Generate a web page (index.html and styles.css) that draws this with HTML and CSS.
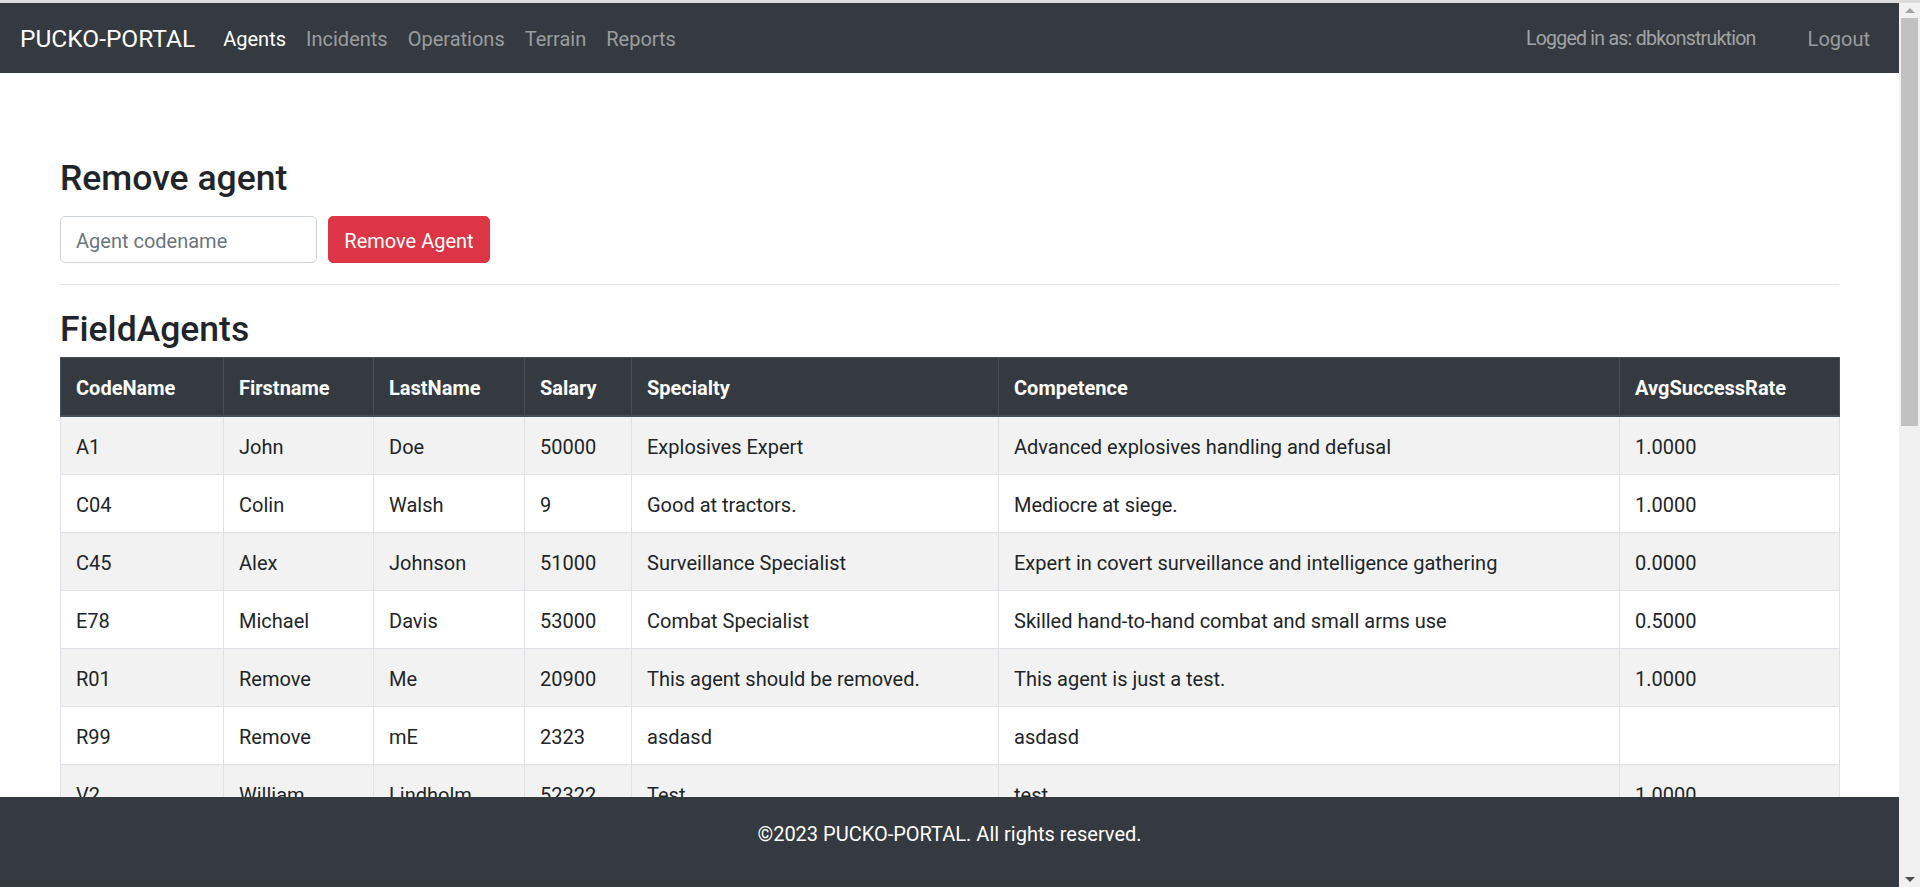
FILE: index.html
```html
<!DOCTYPE html>
<html lang="en">
<head>
<meta charset="utf-8">
<title>PUCKO-PORTAL - Agents</title>
<link rel="stylesheet" href="styles.css">
</head>
<body>
<div class="top-strip"></div>
<div class="window">
  <div class="viewport">
    <nav class="navbar">
      <a class="brand" href="#">PUCKO-PORTAL</a>
      <ul class="nav-list">
        <li><a class="nav-link active" href="#">Agents</a></li>
        <li><a class="nav-link" href="#">Incidents</a></li>
        <li><a class="nav-link" href="#">Operations</a></li>
        <li><a class="nav-link" href="#">Terrain</a></li>
        <li><a class="nav-link" href="#">Reports</a></li>
      </ul>
      <div class="nav-right">
        <span class="nav-text">Logged in as: dbkonstruktion</span>
        <a class="nav-link" href="#">Logout</a>
      </div>
    </nav>

    <main class="content">
      <h3 class="heading">Remove agent</h3>
      <form class="remove-form">
        <input class="form-control" type="text" placeholder="Agent codename">
        <button class="btn-danger" type="button">Remove Agent</button>
      </form>
      <hr class="divider">
      <h3 class="heading heading-table">FieldAgents</h3>
      <table class="agents">
        <colgroup>
          <col class="c-code"><col class="c-first"><col class="c-last"><col class="c-salary"><col class="c-spec"><col class="c-comp"><col class="c-rate">
        </colgroup>
        <thead>
          <tr><th>CodeName</th><th>Firstname</th><th>LastName</th><th>Salary</th><th>Specialty</th><th>Competence</th><th>AvgSuccessRate</th></tr>
        </thead>
        <tbody>
          <tr><td>A1</td><td>John</td><td>Doe</td><td>50000</td><td>Explosives Expert</td><td>Advanced explosives handling and defusal</td><td>1.0000</td></tr>
          <tr><td>C04</td><td>Colin</td><td>Walsh</td><td>9</td><td>Good at tractors.</td><td>Mediocre at siege.</td><td>1.0000</td></tr>
          <tr><td>C45</td><td>Alex</td><td>Johnson</td><td>51000</td><td>Surveillance Specialist</td><td>Expert in covert surveillance and intelligence gathering</td><td>0.0000</td></tr>
          <tr><td>E78</td><td>Michael</td><td>Davis</td><td>53000</td><td>Combat Specialist</td><td>Skilled hand-to-hand combat and small arms use</td><td>0.5000</td></tr>
          <tr><td>R01</td><td>Remove</td><td>Me</td><td>20900</td><td>This agent should be removed.</td><td>This agent is just a test.</td><td>1.0000</td></tr>
          <tr><td>R99</td><td>Remove</td><td>mE</td><td>2323</td><td>asdasd</td><td>asdasd</td><td></td></tr>
          <tr><td>V2</td><td>William</td><td>Lindholm</td><td>52322</td><td>Test</td><td>test</td><td>1.0000</td></tr>
        </tbody>
      </table>
    </main>

    <footer class="footer">
      <p>©2023 PUCKO-PORTAL. All rights reserved.</p>
    </footer>
  </div>
  <div class="scrollbar">
    <div class="arrow arrow-up"></div>
    <div class="track"><div class="thumb"></div></div>
    <div class="arrow arrow-down"></div>
  </div>
</div>
</body>
</html>
```

FILE: styles.css
```css
* { box-sizing: border-box; }

html, body {
  margin: 0;
  padding: 0;
  height: 887px;
  overflow: hidden;
}

body {
  font-family: "Segoe UI", Roboto, "Liberation Sans", sans-serif;
  font-size: 20px;
  line-height: 1.5;
  color: #212529;
  background: #ffffff;
}

.top-strip {
  height: 3px;
  background: #dcdcdc;
}

.window {
  display: flex;
  height: 884px;
}

.viewport {
  position: relative;
  flex: 1;
  overflow: hidden;
  background: #ffffff;
}

/* Navbar */
.navbar {
  height: 70px;
  background: #343a40;
  display: flex;
  align-items: center;
  padding: 2px 19px 0 20px;
}

.brand {
  font-size: 24.5px;
  line-height: 36px;
  color: #ffffff;
  text-decoration: none;
  margin-right: 18px;
  white-space: nowrap;
}

.nav-list {
  list-style: none;
  display: flex;
  margin: 0;
  padding: 0;
}

.nav-link {
  display: block;
  padding: 8px 10px;
  color: rgba(255, 255, 255, 0.5);
  text-decoration: none;
  font-size: 20px;
  line-height: 30px;
}

.nav-link.active {
  color: #ffffff;
}

.nav-right {
  margin-left: auto;
  display: flex;
  align-items: center;
}

.nav-text {
  color: rgba(255, 255, 255, 0.55);
  padding: 8px 10px;
  margin-right: 32px;
  font-size: 19.5px;
  letter-spacing: -0.75px;
  line-height: 30px;
}

/* Content */
.content {
  padding: 84px 60px 0 60px;
}

.heading {
  font-size: 35.5px;
  font-weight: 500;
  line-height: 42px;
  margin: 0 0 17px 0;
}

.heading-table {
  margin-bottom: 7px;
}

.remove-form {
  display: flex;
  gap: 11px;
  margin: 0;
}

.form-control {
  width: 257px;
  height: 47px;
  padding: 2px 15px 0 15px;
  font-family: inherit;
  font-size: 20px;
  color: #495057;
  border: 1px solid #ced4da;
  border-radius: 5px;
  background: #ffffff;
}

.form-control::placeholder {
  color: #6c757d;
}

.btn-danger {
  height: 47px;
  width: 162px;
  padding: 2px 15px 0 15px;
  font-family: inherit;
  font-size: 20px;
  color: #ffffff;
  background: #dc3545;
  border: 1px solid #dc3545;
  border-radius: 5px;
}

.divider {
  margin: 21px 0 23px 0;
  border: 0;
  border-top: 1px solid rgba(0, 0, 0, 0.1);
}

/* Table */
.agents {
  width: 1779px;
  table-layout: fixed;
  border-collapse: collapse;
  font-size: 20px;
  line-height: 27px;
}

.c-code { width: 163px; }
.c-first { width: 150px; }
.c-last { width: 151px; }
.c-salary { width: 107px; }
.c-spec { width: 367px; }
.c-comp { width: 621px; }
.c-rate { width: 220px; }

.agents th,
.agents td {
  text-align: left;
  vertical-align: top;
  padding: 17px 15px 13px 15px;
  white-space: nowrap;
  overflow: hidden;
}

.agents th {
  background: #343a40;
  color: #ffffff;
  font-weight: 700;
  border: 1px solid #454d55;
  border-bottom: 2px solid #454d55;
}

.agents td {
  border: 1px solid #dee2e6;
}

.agents tbody tr:nth-child(odd) {
  background: #f2f2f2;
}

/* Footer */
.footer {
  position: absolute;
  left: 0;
  right: 0;
  bottom: 0;
  height: 90px;
  background: #343a40;
  color: #ffffff;
  text-align: center;
}

.footer p {
  margin: 0;
  padding-top: 23px;
  font-size: 20px;
  line-height: 28px;
}

/* Scrollbar */
.scrollbar {
  width: 21px;
  background: #f1f1f1;
  display: flex;
  flex-direction: column;
}

.arrow {
  height: 15px;
  display: flex;
  align-items: center;
  justify-content: center;
}

.arrow-up::before {
  content: "";
  border-left: 5px solid transparent;
  border-right: 5px solid transparent;
  border-bottom: 5px solid #a3a3a3;
}

.arrow-down::before {
  content: "";
  border-left: 5px solid transparent;
  border-right: 5px solid transparent;
  border-top: 5px solid #505050;
}

.track {
  flex: 1;
  padding: 0 2px;
}

.thumb {
  height: 408px;
  background: #c1c1c1;
}
```
